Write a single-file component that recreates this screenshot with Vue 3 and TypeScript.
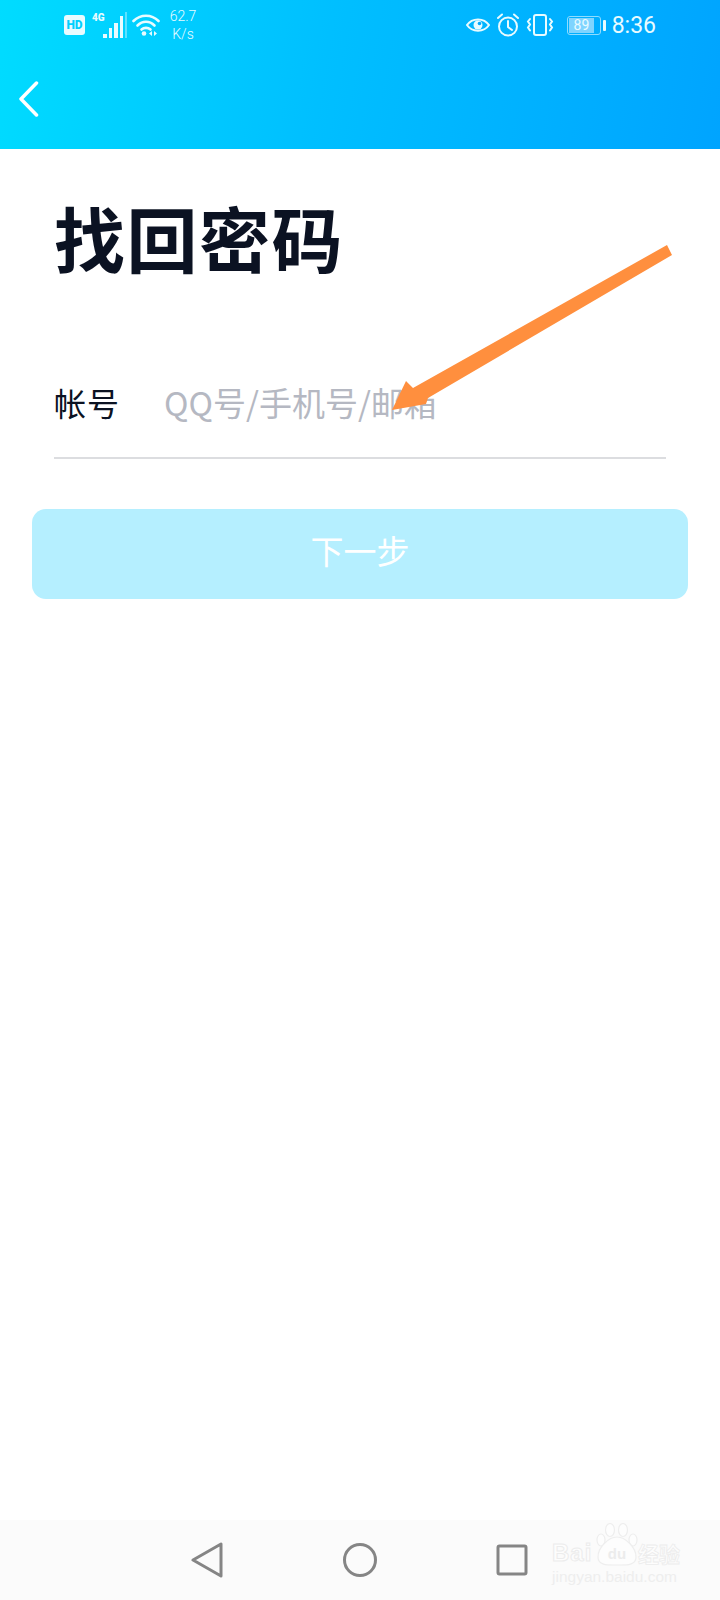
<script setup lang="ts">
const title = '找回密码'
const label = '帐号'
const placeholder = 'QQ号/手机号/邮箱'
const signalBars = [4, 10, 15, 22]
</script>

<template>
  <div class="page">
    <header class="top">
      <div class="status">
        <div class="status-left">
          <span class="hd">HD</span>
          <div class="signal">
            <span class="net">4G</span>
            <i v-for="h in signalBars" :key="h" class="bar" :style="{ height: h + 'px' }"></i>
            <i class="bar dim"></i>
          </div>
          <svg class="wifi" width="28" height="24" viewBox="0 0 28 24" fill="none" stroke="#e8fbff" stroke-width="2.600" stroke-linecap="round">
            <path d="M1.500 8C8.500 1 19.500 1 26.500 8" />
            <path d="M5.500 12.500C10.500 7.500 17.500 7.500 22.500 12.500" />
            <path d="M9.500 16.500C12 14.300 16 14.300 18.500 16.500" />
            <circle cx="12" cy="20.500" r="2.300" fill="#e8fbff" stroke="none" />
            <path d="M20 18v5l-3-2.500zM22 18v5l3-2.500z" fill="#e8fbff" stroke="none" />
          </svg>
          <div class="speed"><span>62.7</span><span>K/s</span></div>
        </div>
        <div class="status-right">
          <svg width="24" height="18" viewBox="0 0 24 18" fill="none" stroke="#e8fbff" stroke-width="2">
            <path d="M1 9C6 1.500 18 1.500 23 9C18 16.500 6 16.500 1 9Z" />
            <circle cx="12" cy="9" r="4.500" fill="#e8fbff" stroke="none" />
            <circle cx="13.500" cy="7.500" r="1.800" fill="#00a8ff" stroke="none" />
          </svg>
          <svg width="24" height="24" viewBox="0 0 24 24" fill="none" stroke="#e8fbff" stroke-width="2" stroke-linecap="round">
            <circle cx="12" cy="13.500" r="9" />
            <path d="M12 8v6l4 3M2 5l4-3.500M22 5l-4-3.500" />
          </svg>
          <svg width="28" height="24" viewBox="0 0 28 24" fill="none" stroke="#e8fbff" stroke-width="2" stroke-linecap="round">
            <rect x="8" y="2" width="12" height="20" rx="2" />
            <path d="M4 6l-2 2.500 2 3-2 3 2 3M24 6l2 2.500-2 3 2 3-2 3" />
          </svg>
          <div class="battery">
            <div class="cell"><span>89</span></div>
            <i class="nub"></i>
          </div>
          <span class="clock">8:36</span>
        </div>
      </div>
      <div class="toolbar">
        <svg width="21" height="36" viewBox="0 0 21 36" fill="none" stroke="#ffffff" stroke-width="3.500" stroke-linecap="round" stroke-linejoin="round">
          <path d="M18.500 2L3 18L18.500 34" />
        </svg>
      </div>
    </header>

    <main class="content">
      <h1 class="title">{{ title }}</h1>
      <div class="field">
        <span class="label">{{ label }}</span>
        <span class="placeholder">{{ placeholder }}</span>
      </div>
      <button class="next"><span>下一步</span></button>
    </main>

    <nav class="navbar">
      <svg width="34" height="36" viewBox="0 0 34 36" fill="none" stroke="#858585" stroke-width="3" stroke-linejoin="round">
        <path d="M3 18L31 2V34Z" />
      </svg>
      <svg width="36" height="36" viewBox="0 0 36 36" fill="none" stroke="#858585" stroke-width="3">
        <circle cx="18" cy="18" r="15.500" />
      </svg>
      <svg width="32" height="32" viewBox="0 0 32 32" fill="none" stroke="#858585" stroke-width="3" stroke-linejoin="round">
        <rect x="2" y="2" width="28" height="28" rx="1.500" />
      </svg>
    </nav>

    <div class="watermark">
      <svg class="paw" width="42" height="44" viewBox="0 0 42 44" fill="#fdfdfd" stroke="#eeeeee" stroke-width="1.200">
        <ellipse cx="5" cy="17" rx="4" ry="6" />
        <ellipse cx="14" cy="7" rx="4.500" ry="6.500" />
        <ellipse cx="27" cy="7" rx="4.500" ry="6.500" />
        <ellipse cx="37" cy="17" rx="4" ry="6" />
        <path d="M21 14C13 14 2 24 2 34C2 43 13 42 21 42C29 42 40 43 40 34C40 24 29 14 21 14Z" />
      </svg>
      <div class="wm-row">
        <span class="wm-bai">Bai</span>
        <span class="wm-du">du</span>
        <span class="wm-cn">经验</span>
      </div>
      <div class="wm-url">jingyan.baidu.com</div>
    </div>

    <svg class="arrow" width="720" height="1600" viewBox="0 0 720 1600">
      <path d="M667 245L672 255L428 398L426 404L392 410L406 381L413 388Z" fill="#ff8f3e" />
    </svg>
  </div>
</template>

<style scoped>
.page {
  position: relative;
  width: 720px;
  height: 1600px;
  display: flex;
  flex-direction: column;
  background: #fff;
  overflow: hidden;
  font-family: "Noto Sans CJK SC", "Noto Sans", sans-serif;
}
.top {
  height: 149px;
  background: linear-gradient(100deg, #00dcff 0%, #00bfff 45%, #00a4ff 100%);
  color: #e8fbff;
}
.status {
  height: 50px;
  padding: 0 64px 0 64px;
  display: flex;
  justify-content: space-between;
  align-items: center;
  font-family: Roboto, sans-serif;
}
.status-left, .status-right {
  display: flex;
  align-items: center;
}
.hd {
  width: 21px;
  height: 20px;
  border-radius: 3px;
  background: #e8fbff;
  color: #00cfff;
  font-size: 12px;
  font-weight: 900;
  line-height: 20px;
  text-align: center;
}
.signal {
  margin-left: 7px;
  height: 26px;
  display: flex;
  align-items: flex-end;
  gap: 2px;
  position: relative;
  padding-left: 11px;
}
.net {
  position: absolute;
  left: 0;
  top: 0;
  font-size: 10px;
  font-weight: 900;
}
.bar {
  width: 3.500px;
  background: #e8fbff;
}
.bar.dim {
  width: 2px;
  height: 26px;
  opacity: 0.4;
}
.wifi {
  margin-left: 5px;
}
.speed {
  margin-left: 8px;
  width: 30px;
  display: flex;
  flex-direction: column;
  align-items: center;
  font-size: 14px;
  font-weight: 300;
  line-height: 18px;
}
.status-right {
  gap: 6px;
}
.battery {
  margin-left: 7px;
  display: flex;
  align-items: center;
  gap: 2px;
}
.cell {
  width: 34px;
  height: 19px;
  border: 1px solid #8fdcff;
  border-radius: 3px;
  padding: 1px;
  box-sizing: border-box;
}
.cell span {
  display: block;
  width: 85%;
  height: 100%;
  background: #7fd4ff;
  font-size: 14px;
  line-height: 15px;
  text-align: center;
}
.nub {
  width: 3px;
  height: 11px;
  background: #e8fbff;
  border-radius: 1px;
}
.clock {
  margin-left: 0;
  font-size: 23px;
}
.toolbar {
  padding: 31px 0 0 18px;
}
.content {
  flex: 1;
  padding: 0 32px;
}
.title {
  margin: 37px 0 0 22px;
  font-size: 71px;
  letter-spacing: 1.500px;
  line-height: 100px;
  font-weight: 700;
  color: #0b1222;
}
.field {
  margin: 73px 22px 0;
  height: 100px;
  display: flex;
  align-items: center;
  padding-bottom: 12px;
  box-sizing: border-box;
  border-bottom: 2px solid #dcdde0;
}
.label {
  width: 110px;
  font-size: 32px;
  letter-spacing: 1px;
  color: #0b1222;
}
.placeholder {
  font-size: 33px;
  color: #b5b8c2;
}
.next {
  display: block;
  width: 100%;
  height: 90px;
  margin-top: 50px;
  padding: 0 0 8px;
  border: 0;
  border-radius: 14px;
  background: #b5efff;
  color: #fff;
  font-family: inherit;
  font-size: 33px;
}
.navbar {
  height: 80px;
  background: #fbfbfb;
  display: flex;
  align-items: center;
  padding-left: 190px;
  gap: 118px;
}
.watermark {
  position: absolute;
  left: 552px;
  top: 1523px;
  width: 128px;
  height: 62px;
  color: #eeeeee;
}
.paw {
  position: absolute;
  left: 44px;
  top: 0;
}
.wm-row {
  position: relative;
  height: 24px;
  margin-top: 18px;
  display: flex;
  align-items: center;
  font-family: "Liberation Sans", sans-serif;
}
.wm-bai {
  width: 44px;
  font-size: 24px;
  font-weight: 700;
  letter-spacing: 1px;
  color: #fdfdfd;
  -webkit-text-stroke: 1px #ececec;
}
.wm-du {
  width: 42px;
  font-size: 15px;
  font-weight: 700;
  text-align: center;
  color: #ececec;
}
.wm-cn {
  font-family: "Noto Sans CJK SC", sans-serif;
  font-size: 21px;
  font-weight: 700;
  color: #fdfdfd;
  -webkit-text-stroke: 0.8px #ececec;
}
.wm-url {
  margin-top: 5px;
  font-family: "Liberation Sans", sans-serif;
  font-size: 15.500px;
  line-height: 14px;
  white-space: nowrap;
}
.arrow {
  position: absolute;
  left: 0;
  top: 0;
  pointer-events: none;
}
</style>
